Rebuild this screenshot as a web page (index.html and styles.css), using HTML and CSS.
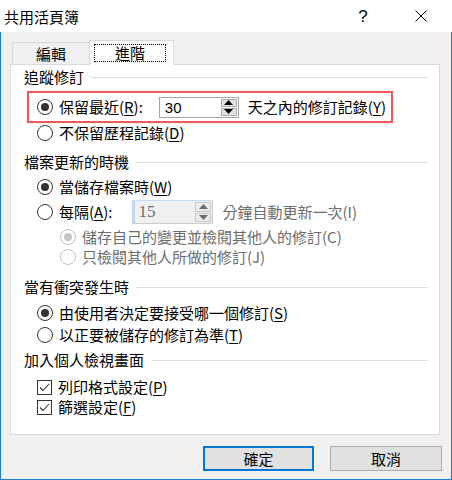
FILE: index.html
```html
<!DOCTYPE html>
<html lang="zh-Hant">
<head>
<meta charset="utf-8">
<title>共用活頁簿</title>
<link rel="stylesheet" href="styles.css">
</head>
<body>
<div class="window">
  <div class="titlebar">
    <span class="title">共用活頁簿</span>
    <span class="help">?</span>
    <span class="close"><svg width="12" height="12" viewBox="0 0 12 12"><path d="M0.5 0.5 L11.5 11.5 M11.5 0.5 L0.5 11.5" stroke="#000" stroke-width="1" fill="none"/></svg></span>
  </div>
  <div class="client">
    <div class="tabs">
      <div class="tab">編輯</div>
      <div class="tab active"><span class="focus">進階</span></div>
    </div>
    <div class="panel">
      <div class="group-title"><span>追蹤修訂</span></div>
      <div class="row highlight">
        <span class="radio on"></span>
        <span class="label">保留最近(<u>R</u>):</span>
        <span class="spin">
          <span class="spin-value">30</span>
          <span class="spin-btns">
            <span class="spin-btn"><svg width="9" height="5" viewBox="0 0 9 5"><path d="M0 5 L4.5 0 L9 5 Z" fill="#000"/></svg></span>
            <span class="spin-btn"><svg width="9" height="5" viewBox="0 0 9 5"><path d="M0 0 L4.5 5 L9 0 Z" fill="#000"/></svg></span>
          </span>
        </span>
        <span class="label after">天之內的修訂記錄(<u>Y</u>)</span>
      </div>
      <div class="row opt r-d">
        <span class="radio"></span>
        <span class="label">不保留歷程記錄(<u>D</u>)</span>
      </div>

      <div class="group-title g2"><span>檔案更新的時機</span></div>
      <div class="row opt r-w">
        <span class="radio on"></span>
        <span class="label">當儲存檔案時(<u>W</u>)</span>
      </div>
      <div class="row opt r-a">
        <span class="radio"></span>
        <span class="label">每隔(<u>A</u>):</span>
        <span class="spin disabled">
          <span class="spin-value">15</span>
          <span class="spin-btns">
            <span class="spin-btn"><svg width="9" height="5" viewBox="0 0 9 5"><path d="M0 5 L4.5 0 L9 5 Z" fill="#6d6d6d"/></svg></span>
            <span class="spin-btn"><svg width="9" height="5" viewBox="0 0 9 5"><path d="M0 0 L4.5 5 L9 0 Z" fill="#6d6d6d"/></svg></span>
          </span>
        </span>
        <span class="label after dim">分鐘自動更新一次(I)</span>
      </div>
      <div class="row sub r-c">
        <span class="radio on off"></span>
        <span class="label dim">儲存自己的變更並檢閱其他人的修訂(C)</span>
      </div>
      <div class="row sub r-j">
        <span class="radio off"></span>
        <span class="label dim">只檢閱其他人所做的修訂(J)</span>
      </div>

      <div class="group-title g3"><span>當有衝突發生時</span></div>
      <div class="row opt r-s">
        <span class="radio on"></span>
        <span class="label">由使用者決定要接受哪一個修訂(<u>S</u>)</span>
      </div>
      <div class="row opt r-t">
        <span class="radio"></span>
        <span class="label">以正要被儲存的修訂為準(<u>T</u>)</span>
      </div>

      <div class="group-title g4"><span>加入個人檢視畫面</span></div>
      <div class="row opt r-p">
        <span class="check"><svg width="11" height="9" viewBox="0 0 11 9"><path d="M1 4.5 L4 7.5 L10 1" stroke="#333" stroke-width="1.1" fill="none"/></svg></span>
        <span class="label">列印格式設定(<u>P</u>)</span>
      </div>
      <div class="row opt r-f">
        <span class="check"><svg width="11" height="9" viewBox="0 0 11 9"><path d="M1 4.5 L4 7.5 L10 1" stroke="#333" stroke-width="1.1" fill="none"/></svg></span>
        <span class="label">篩選設定(<u>F</u>)</span>
      </div>
    </div>
    <div class="buttons">
      <button class="btn default">確定</button>
      <button class="btn">取消</button>
    </div>
  </div>
  <svg class="cursor" width="13" height="20" viewBox="0 0 13 20"><path d="M0.5 0.5 L0.5 16 L4.2 12.6 L6.8 18.6 L9.2 17.6 L6.6 11.8 L11.5 11.8 Z" fill="#fff" stroke="#000" stroke-width="1" stroke-linejoin="miter"/></svg>
</div>
</body>
</html>
```
FILE: styles.css
```css
html, body {
  margin: 0;
  padding: 0;
  background: #fff;
}
body {
  font-family: "Noto Sans CJK TC", "Noto Sans CJK SC", sans-serif;
  font-size: 15px;
  color: #000;
}
.window {
  position: relative;
  width: 452px;
  height: 480px;
  overflow: hidden;
}
.titlebar {
  height: 32px;
  display: flex;
  align-items: center;
  background: #fff;
}
.title {
  padding-left: 4px;
  flex: 1;
  font-size: 15px;
  line-height: 20px;
  margin-top: 1px;
}
.help {
  width: 12px;
  text-align: center;
  font-family: "Liberation Sans", sans-serif;
  font-size: 17px;
  margin-right: 46px;
  margin-top: 1px;
}
.close {
  width: 12px;
  height: 12px;
  margin-right: 25px;
  display: flex;
}
.client {
  height: 448px;
  box-sizing: border-box;
  background: #f0f0f0;
  border: 1px solid #1a7fd4;
  border-top: none;
}
.tabs {
  display: flex;
  align-items: flex-end;
  padding-left: 11px;
  padding-top: 8px;
  height: 24px;
  position: relative;
  z-index: 2;
}
.tab {
  width: 79px;
  height: 22px;
  box-sizing: border-box;
  border: 1px solid #d9d9d9;
  border-bottom: none;
  border-right: none;
  display: flex;
  align-items: center;
  justify-content: center;
  padding-right: 2px;
  line-height: 20px;
  background: #f0f0f0;
}
.tab.active {
  width: 85px;
  height: 25px;
  margin-left: -2px;
  margin-bottom: -1px;
  background: #fff;
  border-right: 1px solid #d9d9d9;
  justify-content: flex-start;
  align-items: flex-start;
  padding: 3px 0 0 4px;
}
.focus {
  width: 72px;
  height: 18px;
  box-sizing: border-box;
  border: 1px dotted #000;
  display: flex;
  align-items: center;
  justify-content: center;
  line-height: 16px;
}
.panel {
  margin-left: 9px;
  width: 430px;
  height: 371px;
  box-sizing: border-box;
  background: #fff;
  border: 1px solid #d9d9d9;
  padding-top: 3px;
  padding-right: 11px;
  position: relative;
  z-index: 1;
}
.group-title {
  display: flex;
  align-items: center;
  height: 18px;
  line-height: 18px;
  padding-left: 13px;
}
.group-title::after {
  content: "";
  flex: 1;
  height: 1px;
  background: #dcdcdc;
  margin-left: 7px;
}
.g2 { margin-top: 10px; }
.g3 { margin-top: 11px; }
.g4 { margin-top: 6px; }
.row {
  display: flex;
  align-items: center;
  height: 20px;
  line-height: 20px;
  white-space: nowrap;
}
.opt { padding-left: 26px; }
.sub { padding-left: 49px; }
.highlight {
  margin-top: 5px;
  margin-left: 16px;
  width: 366px;
  height: 32px;
  box-sizing: border-box;
  border: 2px solid #ec5a5a;
  padding-left: 8px;
  box-shadow: 0 0 1px rgba(236, 90, 90, 0.5);
}
.r-w { margin-top: 6px; }
.r-a { margin-top: 3px; height: 24px; }
.r-c { margin-top: 3px; }
.r-s { margin-top: 7px; }
.r-t { margin-top: 2px; }
.r-p { margin-top: 8px; }
.radio {
  width: 16px;
  height: 16px;
  box-sizing: border-box;
  border: 1px solid #333;
  border-radius: 50%;
  background: #fff;
  flex: none;
  display: flex;
  align-items: center;
  justify-content: center;
  margin-right: 6px;
}
.radio.on::after {
  content: "";
  width: 8px;
  height: 8px;
  border-radius: 50%;
  background: #333;
}
.radio.off {
  border-color: #c4c4c4;
}
.radio.on.off::after {
  background: #c4c4c4;
}
.sub .radio { margin-right: 6px; }
.check {
  width: 15px;
  height: 15px;
  box-sizing: border-box;
  border: 1px solid #333;
  background: #fff;
  flex: none;
  display: flex;
  align-items: center;
  justify-content: center;
  margin-right: 6px;
}
.label u {
  text-decoration: underline;
  text-underline-offset: 2px;
}
.dim { color: #6d6d6d; }
.spin {
  display: flex;
  margin-left: 16px;
  width: 80px;
  height: 21px;
  box-sizing: border-box;
  border: 1px solid #a5a5a5;
  background: #fff;
}
.r-a .spin {
  margin-left: 20px;
  width: 81px;
  height: 24px;
  border: 1px solid #c8dcf0;
  border-left: 3px solid #c2d8ef;
  border-bottom-color: #cccccc;
  border-right-color: #cccccc;
  background: #f0f0f0;
}
.spin-value {
  flex: 1;
  padding-left: 5px;
  line-height: 19px;
  font-family: "Liberation Sans", sans-serif;
  font-size: 15px;
}
.r-a .spin-value {
  color: #6d6d6d;
  line-height: 22px;
  padding-left: 3px;
  font-family: "Liberation Serif", serif;
  font-size: 17px;
}
.spin-btns {
  width: 16px;
  display: flex;
  flex-direction: column;
  padding: 1px;
  gap: 1px;
}
.spin-btn {
  flex: 1;
  background: #e1e1e1;
  border: 1px solid #adadad;
  display: flex;
  align-items: center;
  justify-content: center;
}
.r-a .spin-btn {
  background: #ececec;
  border-color: #c8c8c8;
}
.after { margin-left: 9px; }
.buttons {
  display: flex;
  justify-content: flex-end;
  gap: 16px;
  padding-right: 9px;
  margin-top: 11px;
}
.btn {
  font-family: "Noto Sans CJK TC", sans-serif;
  font-size: 15px;
  width: 112px;
  height: 25px;
  box-sizing: border-box;
  background: #e1e1e1;
  border: 1px solid #adadad;
  padding: 0;
  margin: 0;
  line-height: 20px;
  color: #000;
}
.btn.default {
  width: 111px;
  border: 2px solid #0078d7;
}
.cursor {
  position: absolute;
  left: 388px;
  top: 130px;
}
```
